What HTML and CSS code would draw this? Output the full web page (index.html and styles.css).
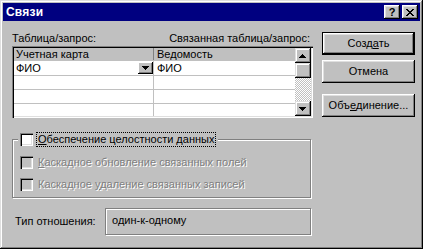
FILE: index.html
```html
<!DOCTYPE html>
<html lang="ru">
<head>
<meta charset="utf-8">
<title>Связи</title>
<link rel="stylesheet" href="styles.css">
</head>
<body>
<div class="window">
  <div class="titlebar">
    <span class="title">Связи</span>
    <div class="tbtns">
      <span class="tbtn help">?</span>
      <span class="tbtn close"><svg width="8" height="7" viewBox="0 0 8 7" shape-rendering="crispEdges"><path d="M0 0h2v1h-2zM6 0h2v1h-2zM1 1h2v1h-2zM5 1h2v1h-2zM2 2h4v1h-4zM3 3h2v1h-2zM2 4h4v1h-4zM1 5h2v1h-2zM5 5h2v1h-2zM0 6h2v1h-2zM6 6h2v1h-2z" fill="#000"/></svg></span>
    </div>
  </div>
  <div class="body">
    <div class="left">
      <div class="labels"><span>Таблица/запрос:</span><span>Связанная таблица/запрос:</span></div>
      <div class="grid">
        <div class="cells">
          <div class="row head"><div class="c1">Учетная карта</div><div class="c2">Ведомость</div></div>
          <div class="row first"><div class="c1">ФИО<span class="combo"><svg width="7" height="4" viewBox="0 0 7 4" shape-rendering="crispEdges"><path d="M0 0h7v1h-7zM1 1h5v1h-5zM2 2h3v1h-3zM3 3h1v1h-1z" fill="#000"/></svg></span></div><div class="c2">ФИО</div></div>
          <div class="row"><div class="c1"></div><div class="c2"></div></div>
          <div class="row"><div class="c1"></div><div class="c2"></div></div>
          <div class="row"><div class="c1"></div><div class="c2"></div></div>
        </div>
        <div class="vscroll">
          <div class="sbtn"><svg width="7" height="4" viewBox="0 0 7 4" shape-rendering="crispEdges"><path d="M3 0h1v1h-1zM2 1h3v1h-3zM1 2h5v1h-5zM0 3h7v1h-7z" fill="#000"/></svg></div>
          <div class="thumb"></div>
          <div class="track"></div>
          <div class="sbtn"><svg width="7" height="4" viewBox="0 0 7 4" shape-rendering="crispEdges"><path d="M0 0h7v1h-7zM1 1h5v1h-5zM2 2h3v1h-3zM3 3h1v1h-1z" fill="#000"/></svg></div>
        </div>
      </div>
      <div class="group">
        <div class="legend">
          <span class="cb"></span>
          <span class="focus"><u>О</u>беспечение целостности данных</span>
        </div>
        <div class="chk-row disabled"><span class="cb"></span><span class="txt"><u>К</u>аскадное обновление связанных полей</span></div>
        <div class="chk-row disabled"><span class="cb"></span><span class="txt">Каскадное <u>у</u>даление связанных записей</span></div>
      </div>
      <div class="typerow">
        <span class="typelabel">Тип отношения:</span>
        <div class="typefield">один-к-одному</div>
      </div>
    </div>
    <div class="right">
      <div class="btn default">Созд<u>а</u>ть</div>
      <div class="btn cancel">Отмена</div>
      <div class="btn join">Объ<u>е</u>динение...</div>
    </div>
  </div>
</div>
</body>
</html>
```

FILE: styles.css
```css
* { box-sizing: border-box; margin: 0; padding: 0; }
html, body { width: 423px; height: 249px; overflow: hidden; background: #c0c0c0; }
body {
  font-family: "Liberation Sans", Arial, sans-serif;
  font-size: 11px;
  line-height: 13px;
  color: #000;
}
u { text-decoration: underline; text-underline-offset: 1px; }

.window {
  width: 423px;
  height: 249px;
  padding: 3px;
  background: #c0c0c0;
  box-shadow: inset -1px -1px #000, inset 1px 1px #dfdfdf, inset -2px -2px #808080, inset 2px 2px #fff;
  display: flex;
  flex-direction: column;
}

.titlebar {
  height: 18px;
  background: #000080;
  color: #fff;
  display: flex;
  align-items: center;
  justify-content: space-between;
  padding: 0 2px 0 3px;
}
.title { font-weight: bold; font-size: 12px; line-height: 18px; letter-spacing: 0.2px; }
.tbtns { display: flex; gap: 2px; }
.tbtn {
  width: 16px;
  height: 14px;
  background: #c0c0c0;
  box-shadow: inset -1px -1px #000, inset 1px 1px #fff, inset -2px -2px #808080, inset 2px 2px #dfdfdf;
  display: flex;
  align-items: center;
  justify-content: center;
  color: #000;
  font-weight: bold;
  font-size: 11px;
  line-height: 12px;
}
.tbtn svg { display: block; margin-left: -1px; }

.body {
  display: flex;
  gap: 9px;
  padding: 11px 0 0 9px;
}
.left { width: 301px; display: flex; flex-direction: column; }
.right { width: 93px; display: flex; flex-direction: column; }

.labels {
  display: flex;
  justify-content: space-between;
  height: 13px;
  padding-right: 3px;
}

.grid {
  margin-top: 1px;
  height: 72px;
  padding: 2px;
  background: #fff;
  display: flex;
  box-shadow: inset 1px 1px #808080, inset 2px 2px #000, inset -1px -1px #fff, inset -2px -2px #dfdfdf;
}
.cells { flex: 1; display: flex; flex-direction: column; overflow: hidden; }
.row { display: flex; height: 14px; flex: none; border-top: 1px solid #c0c0c0; }
.row.first { height: 15px; }
.row.head { height: 12px; border-top: 0; background: #c0c0c0; line-height: 12px; }
.row .c1 { width: 139px; padding-left: 2px; position: relative; }
.row .c2 { flex: 1; padding-left: 3px; border-left: 1px solid #c0c0c0; }
.row.head .c2 { border-left-color: #808080; }
.row.first .c1, .row.first .c2 { padding-top: 1px; }

.combo {
  position: absolute;
  right: 0;
  top: 1px;
  width: 15px;
  height: 12px;
  background: #c0c0c0;
  box-shadow: inset -1px -1px #000, inset 1px 1px #fff, inset -2px -2px #808080;
  display: flex;
  align-items: center;
  justify-content: center;
}
.combo svg { display: block; margin-top: -1px; }

.vscroll { width: 16px; display: flex; flex-direction: column; }
.sbtn, .thumb {
  background: #c0c0c0;
  box-shadow: inset -1px -1px #000, inset 1px 1px #dfdfdf, inset -2px -2px #808080, inset 2px 2px #fff;
}
.sbtn { height: 15px; display: flex; align-items: center; justify-content: center; }
.sbtn svg { display: block; margin-left: -1px; }
.thumb { height: 15px; }
.track {
  flex: 1;
  background: repeating-conic-gradient(#fff 0 25%, #c0c0c0 0 50%) 0 0 / 2px 2px;
}

.group {
  position: relative;
  margin-top: 21px;
  width: 299px;
  height: 59px;
  border: 1px solid #808080;
  box-shadow: 1px 1px 0 #fff, inset 1px 1px 0 #fff;
  padding: 16px 0 6px 7px;
  display: flex;
  flex-direction: column;
  gap: 9px;
}
.legend {
  position: absolute;
  left: 5px;
  top: -8px;
  height: 15px;
  padding: 0 2px;
  background: #c0c0c0;
  display: flex;
  align-items: center;
}
.cb {
  width: 13px;
  height: 13px;
  flex: none;
  background: #fff;
  box-shadow: inset 1px 1px #808080, inset 2px 2px #000, inset -1px -1px #fff, inset -2px -2px #dfdfdf;
}
.focus {
  margin-left: 3px;
  border: 1px dotted #000;
  padding: 0 1px;
  line-height: 13px;
}
.chk-row { display: flex; align-items: center; height: 13px; }
.chk-row .txt { margin-left: 5px; }
.disabled .cb { background: #c0c0c0; }
.disabled .txt { color: #808080; text-shadow: 1px 1px 0 #fff; }

.typerow { margin-top: 10px; display: flex; align-items: center; height: 27px; }
.typelabel { width: 93px; padding-left: 3px; }
.typefield {
  width: 206px;
  height: 27px;
  border: 1px solid #808080;
  box-shadow: 1px 1px 0 #fff, inset 1px 1px 0 #fff;
  padding: 5px 0 0 6px;
}

.btn {
  width: 93px;
  height: 23px;
  background: #c0c0c0;
  display: flex;
  align-items: center;
  justify-content: center;
  box-shadow: inset -1px -1px #000, inset 1px 1px #fff, inset -2px -2px #808080, inset 2px 2px #dfdfdf;
}
.btn.default {
  border: 1px solid #000;
  box-shadow: inset -1px -1px #000, inset 1px 1px #fff, inset -2px -2px #808080, inset 2px 2px #dfdfdf;
}
.btn.cancel { margin-top: 5px; }
.btn.join { margin-top: 11px; }
```
